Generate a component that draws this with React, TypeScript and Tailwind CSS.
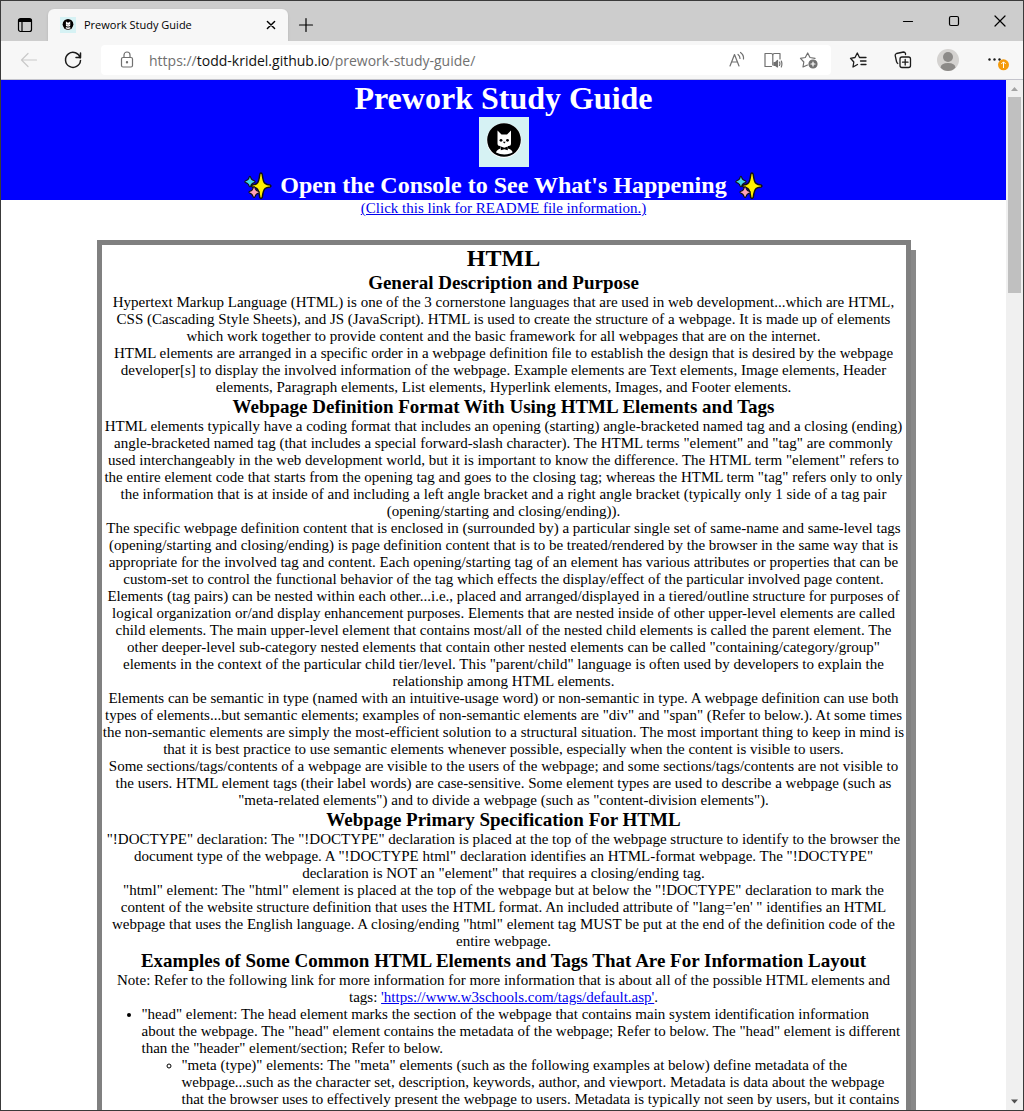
import React from 'react';

function Cat({ className }: { className: string }) {
  return (
    <svg viewBox="0 0 50 50" className={className} aria-label="Cat logo" role="img">
      <rect width="50" height="50" fill="#d6f2f4" />
      <circle cx="25" cy="23.500" r="17.400" fill="#fff" />
      <circle cx="25" cy="23" r="16.800" fill="#000" />
      <path d="M18.500 13.500 L22.500 17.500 H28 L32 13.500 V26.500 Q32 29 29.500 29 H21 Q18.500 29 18.500 26.500 Z" fill="#fff" />
      <path d="M21.500 29 H29 V31.500 Q33.500 33 33.500 35.500 Q29.500 37.500 25.300 37.500 Q21 37.500 17 35.500 Q17.500 33 21.500 31.500 Z" fill="#fff" />
      <path d="M21.800 29.500 L25.300 30.800 L28.800 29.500 V33.300 L25.300 32.200 L21.800 33.300 Z" fill="#000" />
      <circle cx="22" cy="23.300" r="1.400" fill="#000" />
      <circle cx="28.500" cy="23.300" r="1.400" fill="#000" />
      <path d="M23.800 24.800 H26.800 L25.300 26.500 Z" fill="#000" />
    </svg>
  );
}

function Sparkles() {
  return (
    <svg viewBox="0 0 27 27" className="size-7 shrink-0" stroke="#111" strokeLinejoin="round" aria-hidden="true">
      <path d="M16.300 1 Q17.300 1 17.600 2.500 Q18.500 9.800 20.300 11 Q21.800 12.200 25.300 12.600 Q26.700 13.500 25.300 14.400 Q21.500 14.800 20.300 16 Q18.500 17.400 17.600 24.500 Q16.300 26.500 15.200 24.500 Q14.300 17.400 12.500 16 Q11.200 14.800 8 14.400 Q6.800 13.500 8 12.600 Q11.200 12.200 12.500 11 Q14.300 9.800 15.200 2.500 Q15.400 1 16.300 1Z" fill="#fff100" strokeWidth="1.400" />
      <path d="M5.700 4.200 Q6.400 4.200 6.500 5.500 Q7 7.800 10.300 8.700 Q11 9.400 10.300 10.100 Q7 10.800 6.500 13.500 Q5.700 15 4.900 13.500 Q4.400 10.800 1.200 10.100 Q.5 9.400 1.200 8.700 Q4.400 7.800 4.900 5.500 Q5 4.200 5.700 4.200Z" fill="#45d4ee" strokeWidth="1" />
      <path d="M9.700 14.200 Q10.500 14.200 10.700 15.700 Q11.200 18 14.200 18.800 Q15 19.500 14.200 20.200 Q11.200 21 10.700 23.700 Q9.700 25.500 8.700 23.700 Q8.200 21 5.200 20.200 Q4.400 19.500 5.200 18.800 Q8.200 18 8.700 15.700 Q8.900 14.200 9.700 14.200Z" fill="#ffa0b8" strokeWidth="1" />
    </svg>
  );
}

function Icon({ children, className = 'size-5', width = 1.2 }: { children: React.ReactNode; className?: string; width?: number }) {
  return (
    <svg viewBox="0 0 20 20" className={className} fill="none" stroke="currentColor" strokeWidth={width} strokeLinecap="round" strokeLinejoin="round" aria-hidden="true">
      {children}
    </svg>
  );
}

function TabBar() {
  return (
    <div className="flex h-10 shrink-0 items-end bg-[#cdcdcd] text-black">
      <button aria-label="Tab actions" className="flex h-8 w-[47px] items-center justify-center">
        <Icon>
          <rect x="3.500" y="3.500" width="13" height="13" rx="2" />
          <path d="M4 4.500 H16 V6.500 H4Z" fill="currentColor" />
          <path d="M7 7 V16" />
        </Icon>
      </button>
      <div className="flex h-8 w-60 items-center rounded-t-md bg-[#f7f7f7] pr-2 pl-3 shadow-sm">
        <Cat className="size-4 shrink-0" />
        <span className="ml-2 flex-1 text-[11px] whitespace-nowrap">Prework Study Guide</span>
        <button aria-label="Close tab">
          <Icon className="size-[18px]" width={1.6}><path d="M6 6 L14 14 M14 6 L6 14" /></Icon>
        </button>
      </div>
      <button aria-label="New tab" className="ml-2 flex h-8 items-center">
        <Icon><path d="M3.500 10 H16.500 M10 3.500 V16.500" /></Icon>
      </button>
      <div className="ml-auto flex h-10 items-center">
        <button aria-label="Minimize" className="flex w-[46px] justify-center"><Icon><path d="M5.500 10.500 H14.500" /></Icon></button>
        <button aria-label="Maximize" className="flex w-[46px] justify-center"><Icon><rect x="5.500" y="5.500" width="9" height="9" rx="1.500" /></Icon></button>
        <button aria-label="Close" className="flex w-[46px] justify-center"><Icon><path d="M5 5 L15 15 M15 5 L5 15" /></Icon></button>
      </div>
    </div>
  );
}

function Toolbar() {
  return (
    <div className="flex h-[39px] shrink-0 items-center border-b border-[#c4c4cc] bg-[#f7f7f7] text-[#1b1b1b]">
      <button aria-label="Back" className="ml-[18px] text-[#c9c9c9]"><Icon><path d="M17.500 10 H2.500 M9 3.500 L2.500 10 L9 16.500" /></Icon></button>
      <button aria-label="Refresh" className="ml-6"><Icon width={1.5}><path d="M17.300 8 A7.500 7.500 0 1 0 17.500 10.500 M17.500 3 V7.500 H13" /></Icon></button>
      <div className="ml-[18px] flex h-[30px] flex-1 items-center rounded bg-white pr-3 pl-4 text-[#707070]">
        <Icon>
          <rect x="4.500" y="7.500" width="11" height="9.500" rx="1.500" />
          <path d="M7 7.500 V5 a3 3 0 0 1 6 0 V7.500" />
          <circle cx="10" cy="12.300" r=".6" fill="currentColor" />
        </Icon>
        <a href="https://todd-kridel.github.io/prework-study-guide/" className="ml-3 flex-1 text-[14px] whitespace-nowrap">
          https://<span className="text-[#111]">todd-kridel.github.io</span>/prework-study-guide/
        </a>
        <div className="flex gap-4">
          <button aria-label="Read aloud">
            <Icon><path d="M3 16 L7.500 4.500 L12 16 M4.700 12 H10.400 M11 4.500 Q13 6 13 8.500 M13.500 2.500 Q17 5 16.500 9" /></Icon>
          </button>
          <button aria-label="Immersive reader">
            <Icon>
              <path d="M8.500 16.500 H2 V3.500 H8 Q9.800 3.500 9.800 5.500 V15 M9.800 5.500 Q9.800 3.500 11.500 3.500 H17 V9" />
              <path d="M11 12.500 H12.500 L14.500 10.500 V17 L12.500 15.500 H11Z" fill="currentColor" />
              <path d="M16.500 12 Q17.300 13.700 16.500 15.500 M18.300 11 Q19.500 14 18.300 17" />
            </Icon>
          </button>
          <button aria-label="Add to favorites">
            <Icon>
              <path d="M8.500 15 L4 17 L4.800 12 L1.500 8.300 L6.300 7.500 L8.700 3 L11 7.500 L16 8.300" />
              <circle cx="14" cy="14" r="4" fill="currentColor" />
              <path d="M12 14 H16 M14 12 V16" stroke="#fff" />
            </Icon>
          </button>
        </div>
      </div>
      <div className="flex items-center gap-6 pr-4 pl-[18px]">
        <button aria-label="Favorites">
          <Icon width={1.3}><path d="M8.500 14.500 L4 17 L4.800 12 L1.500 8.300 L6 7.500 L8.300 3 L10.500 7.500 H17 M11.500 11 H17 M12 14.500 H17" /></Icon>
        </button>
        <button aria-label="Collections">
          <Icon width={1.3}>
            <rect x="7" y="7" width="10.500" height="10.500" rx="2" />
            <path d="M12.200 9.500 V15 M9.500 12.200 H15 M4.800 13.500 Q3.800 12.800 3.500 11.500 L2.200 5.500 Q2 4 3.500 3.500 L10.500 2 Q12 2 12.500 3.500 V4.500" />
          </Icon>
        </button>
        <button aria-label="Profile">
          <svg viewBox="0 0 22 22" className="size-[22px]" aria-hidden="true">
            <circle cx="11" cy="11" r="11" fill="#d4d2d0" />
            <circle cx="11" cy="8" r="5" fill="#8c8a88" />
            <path d="M3.500 18.500 Q4 14 11 14 Q18 14 18.500 18.500 Q15.500 22 11 22 Q6.500 22 3.500 18.500Z" fill="#8c8a88" />
          </svg>
        </button>
        <button aria-label="Settings and more">
          <svg viewBox="0 0 24 24" className="-mr-1 ml-1 size-6" aria-hidden="true">
            <g fill="#1b1b1b"><circle cx="2.500" cy="11.500" r="1.200" /><circle cx="7.500" cy="11.500" r="1.200" /><circle cx="12.500" cy="11.500" r="1.200" /></g>
            <circle cx="16.500" cy="16.800" r="5.500" fill="#f59b0b" />
            <path d="M16.500 20 V14 M14.300 16 L16.500 13.800 L18.700 16" stroke="#fff" fill="none" />
          </svg>
        </button>
      </div>
    </div>
  );
}

function Scrollbar() {
  return (
    <div className="flex w-[17px] shrink-0 flex-col items-center bg-[#f0f0f0]" aria-hidden="true">
      <svg viewBox="0 0 17 17" className="size-[17px]"><path d="M5 11 L8.500 7 L12 11Z" fill="#a3a3a3" /></svg>
      <div className="h-[196px] w-[13px] bg-[#c0c0c0]" />
      <svg viewBox="0 0 17 17" className="mt-auto size-[17px]"><path d="M5 6.500 L8.500 10.500 L12 6.500Z" fill="#505050" /></svg>
    </div>
  );
}

function H3({ children }: { children: React.ReactNode }) {
  return <h3 className="text-[19px] leading-[22px] font-bold">{children}</h3>;
}

function Guide() {
  return (
    <section className="mx-auto mt-[23px] box-content w-4/5 border-[5px] border-[#808080] pb-4 text-center shadow-[5px_10px_#888888]">
      <h2 className="text-[24px] leading-[27px] font-bold">HTML</h2>
      <H3>General Description and Purpose</H3>
      <p>Hypertext Markup Language (HTML) is one of the 3 cornerstone languages that are used in web development...which are HTML, CSS (Cascading Style Sheets), and JS (JavaScript). HTML is used to create the structure of a webpage. It is made up of elements which work together to provide content and the basic framework for all webpages that are on the internet.</p>
      <p>HTML elements are arranged in a specific order in a webpage definition file to establish the design that is desired by the webpage developer[s] to display the involved information of the webpage. Example elements are Text elements, Image elements, Header elements, Paragraph elements, List elements, Hyperlink elements, Images, and Footer elements.</p>
      <H3>Webpage Definition Format With Using HTML Elements and Tags</H3>
      <p>HTML elements typically have a coding format that includes an opening (starting) angle-bracketed named tag and a closing (ending) angle-bracketed named tag (that includes a special forward-slash character). The HTML terms "element" and "tag" are commonly used interchangeably in the web development world, but it is important to know the difference. The HTML term "element" refers to the entire element code that starts from the opening tag and goes to the closing tag; whereas the HTML term "tag" refers only to only the information that is at inside of and including a left angle bracket and a right angle bracket (typically only 1 side of a tag pair (opening/starting and closing/ending)).</p>
      <p>The specific webpage definition content that is enclosed in (surrounded by) a particular single set of same-name and same-level tags (opening/starting and closing/ending) is page definition content that is to be treated/rendered by the browser in the same way that is appropriate for the involved tag and content. Each opening/starting tag of an element has various attributes or properties that can be custom-set to control the functional behavior of the tag which effects the display/effect of the particular involved page content.</p>
      <p>Elements (tag pairs) can be nested within each other...i.e., placed and arranged/displayed in a tiered/outline structure for purposes of logical organization or/and display enhancement purposes. Elements that are nested inside of other upper-level elements are called child elements. The main upper-level element that contains most/all of the nested child elements is called the parent element. The other deeper-level sub-category nested elements that contain other nested elements can be called "containing/category/group" elements in the context of the particular child tier/level. This "parent/child" language is often used by developers to explain the relationship among HTML elements.</p>
      <p>Elements can be semantic in type (named with an intuitive-usage word) or non-semantic in type. A webpage definition can use both types of elements...but semantic elements; examples of non-semantic elements are "div" and "span" (Refer to below.). At some times the non-semantic elements are simply the most-efficient solution to a structural situation. The most important thing to keep in mind is that it is best practice to use semantic elements whenever possible, especially when the content is visible to users.</p>
      <p>Some sections/tags/contents of a webpage are visible to the users of the webpage; and some sections/tags/contents are not visible to the users. HTML element tags (their label words) are case-sensitive. Some element types are used to describe a webpage (such as "meta-related elements") and to divide a webpage (such as "content-division elements").</p>
      <H3>Webpage Primary Specification For HTML</H3>
      <p>"!DOCTYPE" declaration: The "!DOCTYPE" declaration is placed at the top of the webpage structure to identify to the browser the document type of the webpage. A "!DOCTYPE html" declaration identifies an HTML-format webpage. The "!DOCTYPE" declaration is NOT an "element" that requires a closing/ending tag.</p>
      <p>"html" element: The "html" element is placed at the top of the webpage but at below the "!DOCTYPE" declaration to mark the content of the website structure definition that uses the HTML format. An included attribute of "lang='en' " identifies an HTML webpage that uses the English language. A closing/ending "html" element tag MUST be put at the end of the definition code of the entire webpage.</p>
      <H3>Examples of Some Common HTML Elements and Tags That Are For Information Layout</H3>
      <p>Note: Refer to the following link for more information for more information that is about all of the possible HTML elements and tags: <a href="https://www.w3schools.com/tags/default.asp" className="text-[#0000ee] underline">'https://www.w3schools.com/tags/default.asp'</a>.</p>
      <ul className="list-disc pl-10 text-left">
        <li>
          "head" element: The head element marks the section of the webpage that contains main system identification information about the webpage. The "head" element contains the metadata of the webpage; Refer to below. The "head" element is different than the "header" element/section; Refer to below.
          <ul className="list-[circle] pl-10">
            <li>"meta (type)" elements: The "meta" elements (such as the following examples at below) define metadata of the webpage...such as the character set, description, keywords, author, and viewport. Metadata is data about the webpage that the browser uses to effectively present the webpage to users. Metadata is typically not seen by users, but it contains</li>
          </ul>
        </li>
      </ul>
    </section>
  );
}

export default function App() {
  return (
    <div className="flex h-screen flex-col overflow-hidden border border-[#3a3a3a] bg-white font-['Open_Sans',sans-serif]">
      <TabBar />
      <Toolbar />
      <div className="flex min-h-0 flex-1">
        <main className="min-w-0 flex-1 overflow-hidden font-['Liberation_Serif',serif] text-[15px] leading-[17px] text-black">
          <header className="flex flex-col items-center bg-[#0000ff] text-white">
            <h1 className="text-[32px] leading-[37px] font-bold">Prework Study Guide</h1>
            <Cat className="size-[50px]" />
            <h2 className="mt-1 flex items-center gap-2 text-[24px] leading-[29px] font-bold">
              <Sparkles />
              Open the Console to See What's Happening
              <Sparkles />
            </h2>
          </header>
          <div className="text-center">
            <a href="#readme" className="text-[#0000ee] underline">(Click this link for README file information.)</a>
          </div>
          <Guide />
        </main>
        <Scrollbar />
      </div>
    </div>
  );
}
